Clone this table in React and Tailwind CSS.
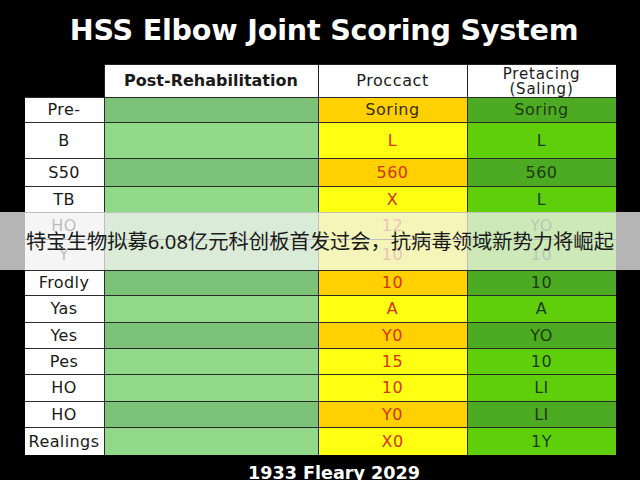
import React from "react";

const rows = [
  { label: "Pre-", p: "Soring", q: "Soring", h: 25, dark: true },
  { label: "B", p: "L", q: "L", h: 36 },
  { label: "S50", p: "560", q: "560", h: 28, dark: true },
  { label: "TB", p: "X", q: "L", h: 26 },
  { label: "HO", p: "12", q: "YO", h: 27 },
  { label: "Y", p: "10", q: "10", h: 31 },
  { label: "Frodly", p: "10", q: "10", h: 25, dark: true },
  { label: "Yas", p: "A", q: "A", h: 27 },
  { label: "Yes", p: "Y0", q: "YO", h: 26, dark: true },
  { label: "Pes", p: "15", q: "10", h: 26 },
  { label: "HO", p: "10", q: "LI", h: 27 },
  { label: "HO", p: "Y0", q: "LI", h: 26, dark: true },
  { label: "Realings", p: "X0", q: "1Y", h: 28 },
];

export default function App() {
  return (
    <div
      className="relative w-[640px] h-[480px] overflow-hidden bg-black flex flex-col items-center"
      style={{ fontFamily: '"DejaVu Sans", "Noto Sans", sans-serif' }}
    >
      <h1 className="mt-[10px] h-[40px] text-[28.6px] leading-[40px] font-bold text-white tracking-[-0.2px] pl-[8px]">
        HSS Elbow Joint Scoring System
      </h1>

      <div className="mt-[14px] w-[591px] flex flex-col">
        {/* header */}
        <div className="flex h-[33px]">
          <div className="w-[79px] shrink-0" />
          <div className="w-[214px] shrink-0 bg-white border-l border-t border-[#222] flex items-center justify-center text-[16px] font-bold text-[#1a1a1a]">
            Post-Rehabilitation
          </div>
          <div className="w-[149px] shrink-0 bg-white border-l border-t border-[#222] flex items-center justify-center text-[16px] tracking-[0.6px] text-[#1a1a1a]">
            Proccact
          </div>
          <div className="w-[149px] shrink-0 bg-white border-l border-t border-[#222] flex flex-col items-center justify-center text-[15px] leading-[15px] tracking-[0.8px] text-[#1a1a1a] pt-[1px]">
            <span>Pretacing</span>
            <span>(Saling)</span>
          </div>
        </div>
        {rows.map((r, i) => (
          <div key={i} className="flex border-t border-[#2a2a2a]" style={{ height: r.h }}>
            <div className="w-[79px] shrink-0 bg-white flex items-center justify-center text-[16px] tracking-[0.4px] text-[#1a1a1a]">
              {r.label}
            </div>
            <div
              className={
                "w-[214px] shrink-0 border-l border-[#2a2a2a] " +
                (r.dark ? "bg-[#7dc279]" : "bg-[#92d889]")
              }
            />
            <div
              className={
                "w-[149px] shrink-0 border-l border-[#2a2a2a] flex items-center justify-center text-[16px] tracking-[0.5px] " +
                (r.dark ? "bg-[#ffd100] " : "bg-[#ffff14] ") +
                (i === 0 ? "text-[#3a2c00]" : "text-[#d43400]")
              }
            >
              {r.p}
            </div>
            <div
              className={
                "w-[149px] shrink-0 border-l border-[#2a2a2a] flex items-center justify-center text-[16px] tracking-[0.5px] text-[#1d3a0e] " +
                (r.dark ? "bg-[#4cab22]" : "bg-[#5fcf0c]")
              }
            >
              {r.q}
            </div>
          </div>
        ))}
      </div>

      <div className="mt-[7px] h-[22px] leading-[22px] text-[17.6px] font-bold text-white ml-[28px]">
        1933 Fleary 2029
      </div>

      <div
        className="absolute left-0 top-[212px] w-[640px] h-[58px] bg-[rgba(242,242,242,0.75)] flex items-center justify-center text-[20.3px] text-[#1a1a1a]"
        style={{ fontFamily: '"Noto Sans", "Noto Sans CJK SC", sans-serif' }}
      >
        特宝生物拟募6.08亿元科创板首发过会，抗病毒领域新势力将崛起
      </div>
    </div>
  );
}
